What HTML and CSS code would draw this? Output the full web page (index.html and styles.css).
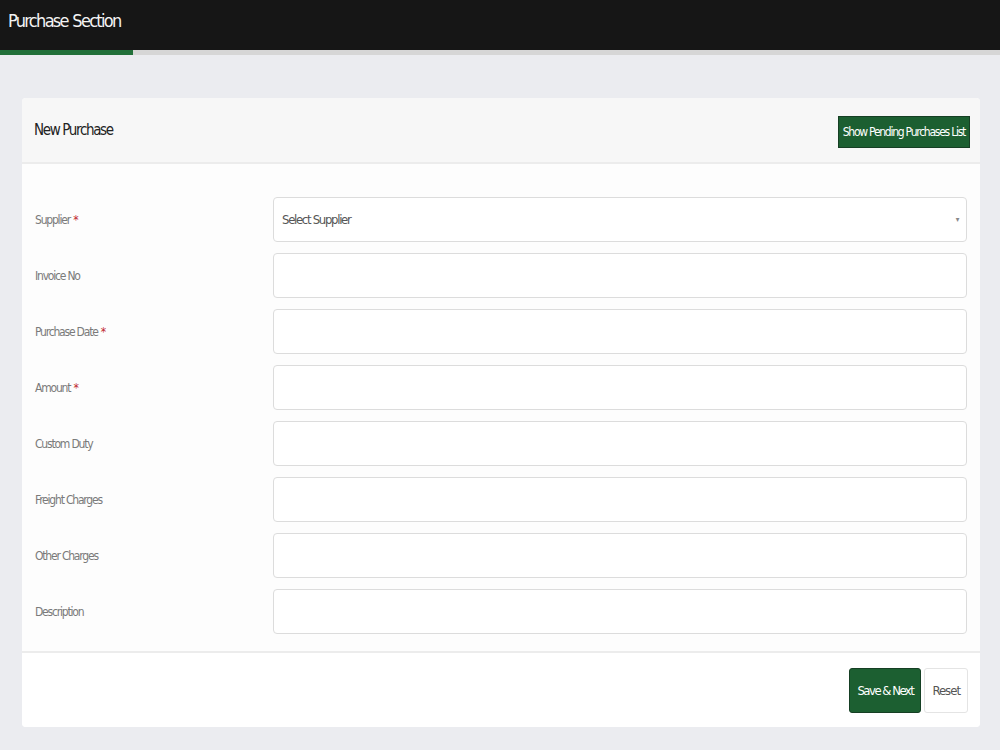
FILE: index.html
```html
<!DOCTYPE html>
<html lang="en">
<head>
    <meta charset="UTF-8">
    <meta name="viewport" content="width=device-width, initial-scale=1.0">
    <title>Purchase Section</title>
    <link rel="stylesheet" href="styles.css">
</head>
<body>
    <header class="topbar">
        <h1>Purchase Section</h1>
    </header>
    <div class="progress"><div class="progress-fill"></div></div>

    <main class="page">
        <div class="card">
            <div class="card-head">
                <h2>New Purchase</h2>
                <button type="button" class="btn-green btn-small">Show Pending Purchases List</button>
            </div>

            <form class="card-body">
                <div class="row">
                    <label>Supplier <span class="req">*</span></label>
                    <div class="field select">
                        <span>Select Supplier</span>
                        <span class="caret">&#9662;</span>
                    </div>
                </div>
                <div class="row">
                    <label>Invoice No</label>
                    <div class="field"></div>
                </div>
                <div class="row">
                    <label>Purchase Date <span class="req">*</span></label>
                    <div class="field"></div>
                </div>
                <div class="row">
                    <label>Amount <span class="req">*</span></label>
                    <div class="field"></div>
                </div>
                <div class="row">
                    <label>Custom Duty</label>
                    <div class="field"></div>
                </div>
                <div class="row">
                    <label>Freight Charges</label>
                    <div class="field"></div>
                </div>
                <div class="row">
                    <label>Other Charges</label>
                    <div class="field"></div>
                </div>
                <div class="row">
                    <label>Description</label>
                    <div class="field"></div>
                </div>
            </form>

            <div class="card-foot">
                <button type="button" class="btn-green btn-big">Save &amp; Next</button>
                <button type="button" class="btn-plain">Reset</button>
            </div>
        </div>
    </main>
</body>
</html>
```

FILE: styles.css
```css
body {
    font-family: "DejaVu Sans", sans-serif;
    font-stretch: condensed;
    background-color: #ebecf0;
    margin: 0;
    padding: 0;
}

.topbar {
    background-color: #161616;
    height: 50px;
    display: flex;
    align-items: center;
    padding-left: 8px;
}

.topbar h1 {
    margin: 0;
    margin-top: -10px;
    color: #f4f4f4;
    font-size: 18px;
    font-weight: normal;
    letter-spacing: -1.7px;
    word-spacing: 1px;
}

.progress {
    height: 5px;
    background-color: #d6d6d6;
}

.progress-fill {
    width: 133px;
    height: 100%;
    background-color: #22703a;
}

.page {
    padding: 43px 20px 24px 22px;
}

.card {
    background-color: #fdfdfd;
    border-radius: 4px;
    overflow: hidden;
}

.card-head {
    background-color: #f7f7f7;
    height: 64px;
    display: flex;
    align-items: center;
    justify-content: space-between;
    padding: 0 10px 0 12px;
    border-bottom: 2px solid #ececec;
}

.card-head h2 {
    margin: 0;
    font-size: 15px;
    font-weight: normal;
    color: #222;
    letter-spacing: -1.35px;
}

button {
    font-family: inherit;
    font-stretch: condensed;
    cursor: pointer;
}

.btn-green {
    background-color: #1c5f31;
    color: #fff;
    border: 1px solid #163f24;
}

.btn-small {
    height: 32px;
    padding: 0 4px;
    font-size: 12px;
    letter-spacing: -1.25px;
    margin-top: 3px;
}

.card-body {
    padding: 33px 13px 17px 13px;
    border-bottom: 2px solid #ececec;
}

.row {
    display: flex;
    align-items: center;
    margin-bottom: 11px;
}

.row:last-child {
    margin-bottom: 0;
}

.row label {
    width: 238px;
    font-size: 12px;
    color: #7a7a7a;
    letter-spacing: -1.2px;
}

.req {
    color: #c0262d;
    margin-left: 1px;
}

.field {
    flex: 1;
    height: 45px;
    border: 1px solid #dcdcdc;
    border-radius: 4px;
    background-color: #fff;
    box-sizing: border-box;
}

.select {
    display: flex;
    align-items: center;
    justify-content: space-between;
    padding: 0 8px 0 8px;
    font-size: 13px;
    color: #555;
    letter-spacing: -1.3px;
}

.caret {
    font-size: 8px;
    color: #888;
}

.card-foot {
    background-color: #fff;
    height: 74px;
    display: flex;
    align-items: center;
    justify-content: flex-end;
    gap: 3px;
    padding-right: 12px;
}

.btn-big {
    height: 45px;
    padding: 0 7px;
    font-size: 13px;
    border-radius: 3px;
    letter-spacing: -1.5px;
}

.btn-plain {
    height: 45px;
    padding: 0 7px;
    font-size: 13px;
    background-color: #fff;
    color: #555;
    border: 1px solid #e4e4e4;
    border-radius: 3px;
    letter-spacing: -1px;
}
```
